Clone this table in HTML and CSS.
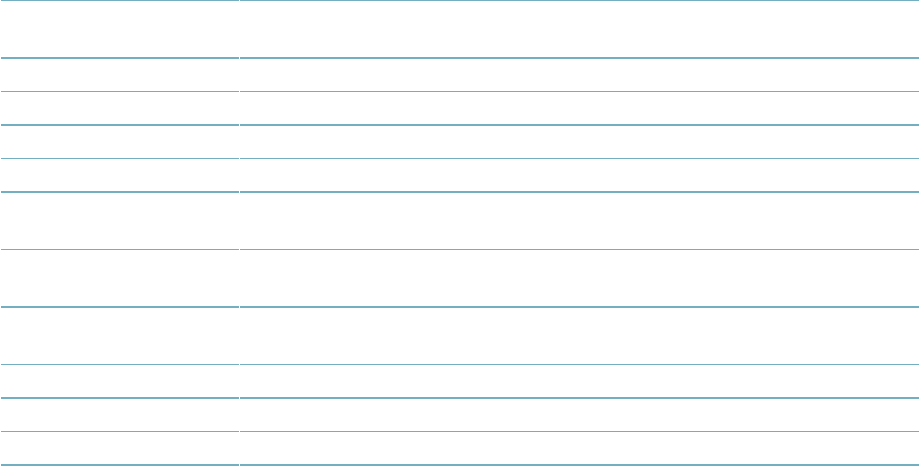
FILE: index.html
```html
<!DOCTYPE html>
<html lang="en">
<head>
  <meta charset="UTF-8">
  <meta name="viewport" content="width=device-width, initial-scale=1.0">
  <title>Table</title>
  <link rel="stylesheet" href="styles.css">
</head>
<body>
  <table class="grid">
    <thead>
      <tr class="head">
        <th></th>
        <th></th>
      </tr>
    </thead>
    <tbody>
      <tr class="row"><td></td><td></td></tr>
      <tr class="row"><td></td><td></td></tr>
      <tr class="row"><td></td><td></td></tr>
      <tr class="row"><td></td><td></td></tr>
      <tr class="row tall"><td></td><td></td></tr>
      <tr class="row tall"><td></td><td></td></tr>
      <tr class="row tall"><td></td><td></td></tr>
      <tr class="row"><td></td><td></td></tr>
      <tr class="row"><td></td><td></td></tr>
      <tr class="row"><td></td><td></td></tr>
    </tbody>
  </table>
</body>
</html>
```

FILE: styles.css
```css
body {
  margin: 0;
  background-color: #ffffff;
  font-family: "Liberation Sans", Arial, sans-serif;
  font-size: 14px;
  color: #333333;
}
.grid {
  width: 100%;
  border-collapse: separate;
  border-spacing: 1px 0;
  table-layout: fixed;
}
.grid th,
.grid td {
  box-sizing: border-box;
  padding: 0;
  border-bottom: 1px solid #74aec1;
  text-align: left;
  font-weight: normal;
}
.grid th:first-child,
.grid td:first-child {
  width: 238px;
}
.head th {
  border-top: 1px solid #74aec1;
  border-bottom-width: 2px;
  height: 59px;
}
.row td {
  height: 33px;
}
.row:nth-child(even) td {
  border-bottom-width: 2px;
  height: 34px;
}
.tall td {
  height: 57px;
}
.tall:nth-child(even) td {
  height: 58px;
}
```
